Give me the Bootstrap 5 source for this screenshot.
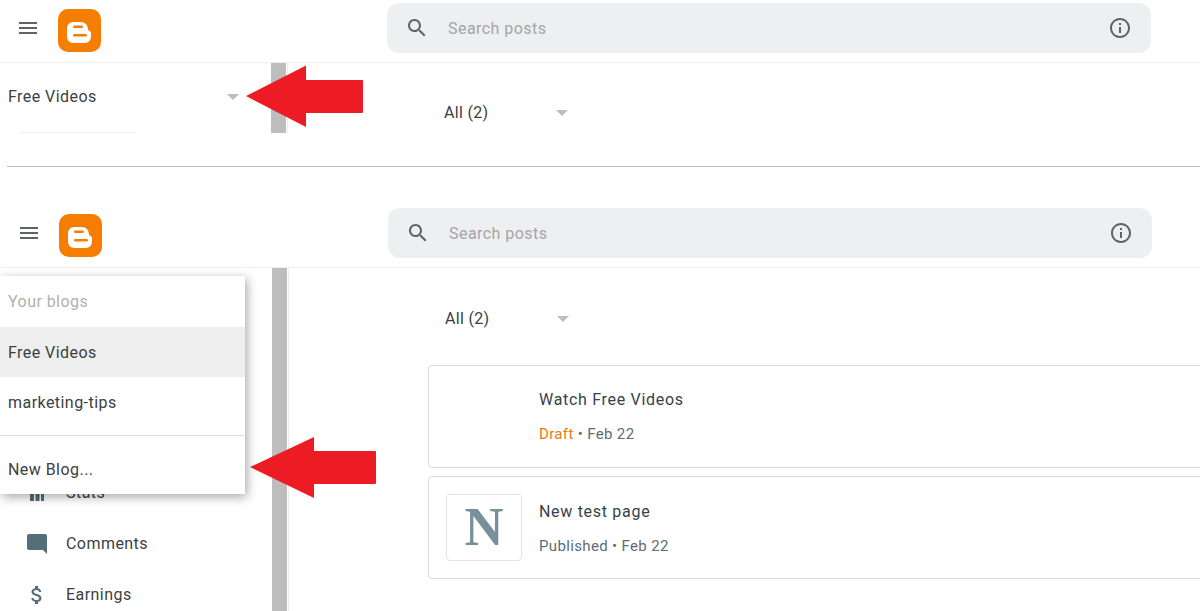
<!DOCTYPE html>
<html lang="en">
<head>
    <meta charset="UTF-8">
    <meta name="viewport" content="width=device-width, initial-scale=1.0">
    <title>Blogger - Posts</title>
    <link href="https://cdn.jsdelivr.net/npm/bootstrap@5.3.0/dist/css/bootstrap.min.css" rel="stylesheet">
    <style>
        html, body {
            height: 611px;
            overflow: hidden;
        }
        body {
            background-color: #fff;
            color: #3c4043;
            font-family: Roboto, "Liberation Sans", sans-serif;
            font-size: 16px;
            letter-spacing: .45px;
        }
        .page-wrap {
            height: 611px;
            overflow: hidden;
        }
        .shot-top {
            height: 133px;
            margin-bottom: 33px;
        }
        .shot-bottom {
            padding-top: 38px;
            padding-left: 1px;
        }
        .shot-rule {
            height: 1px;
            margin-left: 7px;
            background-color: #bdbdbd;
        }
        .app-bar {
            height: 63px;
            padding-bottom: 7px;
            border-bottom: 1px solid #f0f0f0;
        }
        .burger {
            width: 24px;
            height: 24px;
            margin-left: 16px;
            fill: #5f6368;
        }
        .blogger-logo {
            width: 43px;
            height: 43px;
            margin-left: 18px;
            margin-top: 5px;
        }
        .search-box {
            width: 764px;
            height: 50px;
            margin-left: 286px;
            padding: 0 19px 0 18px;
            background-color: #eeeff1;
            border-radius: 12px;
            color: #a3a5a8;
        }
        .search-box svg {
            width: 24px;
            height: 24px;
            fill: #5f6368;
        }
        .search-box span {
            margin-left: 19px;
            padding-top: 2px;
        }
        .side-col {
            width: 271px;
            flex: none;
        }
        .fake-scroll {
            width: 15px;
            flex: none;
            background-color: #bdbdbd;
        }
        .scroll-edge {
            width: 1px;
            flex: none;
            margin-left: 1px;
            background-color: #ececec;
        }
        .top-row {
            height: 70px;
        }
        .blog-picker {
            height: 65px;
            padding: 2px 32px 0 8px;
        }
        .side-fade {
            height: 1px;
            width: 115px;
            margin-left: 20px;
            background-color: #f1f1f1;
        }
        .caret-down {
            width: 0;
            height: 0;
            border-left: 6px solid transparent;
            border-right: 6px solid transparent;
            border-top: 6px solid #bdbdbd;
        }
        .main-col {
            min-width: 0;
            padding-left: 139px;
        }
        .filter-row {
            width: 141px;
            height: 97px;
            padding-left: 17px;
            padding-top: 5px;
            letter-spacing: .3px;
        }
        .filter-row-top {
            height: 98px;
            padding-top: 2px;
        }
        .bottom-row {
            height: 344px;
        }
        .side-stack {
            padding-top: 199px;
        }
        .side-link {
            height: 51px;
            padding-left: 24px;
        }
        .side-link svg {
            width: 24px;
            height: 24px;
            fill: #546e7a;
        }
        .side-link span {
            margin-left: 17px;
        }
        .blog-menu {
            top: 276px;
            left: 0;
            width: 245px;
            padding: 0;
            border: 0;
            border-radius: 0;
            box-shadow: 2px 3px 10px rgba(0, 0, 0, .35);
            font-size: 16px;
        }
        .blog-menu .dropdown-item {
            height: 50px;
            padding: 0 8px;
            line-height: 52px;
            color: #3c4043;
        }
        .blog-menu .menu-label {
            height: 51px;
            line-height: 51px;
            color: #b0b0b0;
        }
        .blog-menu .dropdown-item.is-current {
            background-color: #eeeeee;
        }
        .blog-menu .menu-sep {
            height: 59px;
            border-bottom: 1px solid #e0e0e0;
        }
        .blog-menu .item-new {
            height: 58px;
            line-height: 67px;
        }
        .post-card {
            width: 800px;
            border: 1px solid #d9d9d9;
            border-radius: 4px;
        }
        .post-draft {
            height: 103px;
            margin-bottom: 8px;
        }
        .post-page {
            height: 103px;
        }
        .post-thumb {
            width: 76px;
            height: 67px;
            margin-left: 17px;
            border: 1px solid #e4e4e4;
            border-radius: 4px;
            color: #78909c;
            font-family: "Liberation Serif", "DejaVu Serif", serif;
            font-size: 54px;
            font-weight: 700;
            letter-spacing: 0;
        }
        .post-thumb-empty {
            border-color: transparent;
        }
        .post-text {
            margin-left: 17px;
        }
        .post-page .post-text {
            margin-top: 2px;
        }
        .post-title {
            margin-bottom: 11px;
            color: #37424a;
            letter-spacing: .7px;
        }
        .post-meta {
            font-size: 15px;
            letter-spacing: .35px;
            color: #5f6b76;
        }
        .draft-tag {
            color: #e67a10;
        }
        .red-arrow {
            fill: #ed1c24;
        }
        .arrow-top {
            top: 65px;
            left: 246px;
        }
        .arrow-bottom {
            top: 436px;
            left: 250px;
        }
    </style>
</head>
<body>
    <div class="page-wrap position-relative">

        <div class="shot-top">
            <div class="app-bar d-flex align-items-center">
                <svg class="burger flex-shrink-0" viewBox="0 0 24 24"><path d="M3 18h18v-2H3v2zm0-5h18v-2H3v2zm0-7v2h18V6H3z"/></svg>
                <svg class="blogger-logo flex-shrink-0" viewBox="0 0 43 43"><rect width="43" height="43" rx="10" fill="#f57d00"/><path fill="#fff" d="M15 13h8a7 7 0 0 1 7 7a2 2 0 0 0 1.500 2a2 2 0 0 1 1.500 2V28a6 6 0 0 1-6 6H15a6 6 0 0 1-6-6V19a6 6 0 0 1 6-6z"/><rect x="15" y="16.500" width="10" height="2.600" rx="1.300" fill="#f57d00"/><rect x="15" y="25" width="14" height="2.600" rx="1.300" fill="#f57d00"/></svg>
                <div class="search-box d-flex align-items-center flex-shrink-0">
                    <svg viewBox="0 0 24 24"><path d="M15.5 14h-.79l-.28-.27C15.41 12.59 16 11.11 16 9.5 16 5.91 13.09 3 9.5 3S3 5.91 3 9.5 5.91 16 9.5 16c1.61 0 3.09-.59 4.23-1.57l.27.28v.79l5 4.99L20.49 19l-4.99-5zm-6 0C7.01 14 5 11.99 5 9.5S7.01 5 9.5 5 14 7.01 14 9.5 11.99 14 9.5 14z"/></svg>
                    <span class="flex-grow-1">Search posts</span>
                    <svg viewBox="0 0 24 24"><path d="M11 7h2v2h-2zm0 4h2v6h-2zm1-9C6.48 2 2 6.48 2 12s4.48 10 10 10 10-4.48 10-10S17.52 2 12 2zm0 18c-4.41 0-8-3.59-8-8s3.59-8 8-8 8 3.59 8 8-3.59 8-8 8z"/></svg>
                </div>
            </div>
            <div class="top-row d-flex">
                <div class="side-col">
                    <div class="blog-picker d-flex align-items-center justify-content-between">
                        <span>Free Videos</span>
                        <i class="caret-down"></i>
                    </div>
                    <div class="side-fade mt-1"></div>
                </div>
                <div class="fake-scroll"></div>
                <div class="scroll-edge"></div>
                <div class="main-col flex-grow-1">
                    <div class="filter-row filter-row-top d-flex align-items-center justify-content-between">
                        <span>All (2)</span>
                        <i class="caret-down"></i>
                    </div>
                </div>
            </div>
        </div>

        <div class="shot-rule"></div>

        <div class="shot-bottom">
            <div class="app-bar d-flex align-items-center">
                <svg class="burger flex-shrink-0" viewBox="0 0 24 24"><path d="M3 18h18v-2H3v2zm0-5h18v-2H3v2zm0-7v2h18V6H3z"/></svg>
                <svg class="blogger-logo flex-shrink-0" viewBox="0 0 43 43"><rect width="43" height="43" rx="10" fill="#f57d00"/><path fill="#fff" d="M15 13h8a7 7 0 0 1 7 7a2 2 0 0 0 1.500 2a2 2 0 0 1 1.500 2V28a6 6 0 0 1-6 6H15a6 6 0 0 1-6-6V19a6 6 0 0 1 6-6z"/><rect x="15" y="16.500" width="10" height="2.600" rx="1.300" fill="#f57d00"/><rect x="15" y="25" width="14" height="2.600" rx="1.300" fill="#f57d00"/></svg>
                <div class="search-box d-flex align-items-center flex-shrink-0">
                    <svg viewBox="0 0 24 24"><path d="M15.5 14h-.79l-.28-.27C15.41 12.59 16 11.11 16 9.5 16 5.91 13.09 3 9.5 3S3 5.91 3 9.5 5.91 16 9.5 16c1.61 0 3.09-.59 4.23-1.57l.27.28v.79l5 4.99L20.49 19l-4.99-5zm-6 0C7.01 14 5 11.99 5 9.5S7.01 5 9.5 5 14 7.01 14 9.5 11.99 14 9.5 14z"/></svg>
                    <span class="flex-grow-1">Search posts</span>
                    <svg viewBox="0 0 24 24"><path d="M11 7h2v2h-2zm0 4h2v6h-2zm1-9C6.48 2 2 6.48 2 12s4.48 10 10 10 10-4.48 10-10S17.52 2 12 2zm0 18c-4.41 0-8-3.59-8-8s3.59-8 8-8 8 3.59 8 8-3.59 8-8 8z"/></svg>
                </div>
            </div>
            <div class="bottom-row d-flex">
                <div class="side-col side-stack">
                    <div class="side-link d-flex align-items-center">
                        <svg viewBox="0 0 24 24"><path d="M5 9h4v11H5zM10.500 13h4v7h-4zM16 11h3v9h-3z"/></svg>
                        <span>Stats</span>
                    </div>
                    <div class="side-link d-flex align-items-center">
                        <svg viewBox="0 0 24 24"><path d="M21.99 4c0-1.1-.89-2-1.99-2H4c-1.1 0-2 .9-2 2v12c0 1.100.9 2 2 2h14l4 4-.01-18z"/></svg>
                        <span>Comments</span>
                    </div>
                    <div class="side-link d-flex align-items-center">
                        <svg viewBox="0 0 24 24"><path d="M11.800 10.900c-2.270-.590-3-1.200-3-2.150 0-1.090 1.010-1.850 2.700-1.850 1.780 0 2.440.850 2.500 2.100h2.210c-.070-1.720-1.120-3.300-3.210-3.810V3h-3v2.160c-1.940.420-3.500 1.680-3.500 3.610 0 2.310 1.910 3.460 4.700 4.130 2.500.600 3 1.480 3 2.410 0 .690-.490 1.790-2.700 1.790-2.060 0-2.870-.920-2.980-2.100h-2.200c.120 2.190 1.760 3.420 3.680 3.830V21h3v-2.150c1.950-.370 3.500-1.500 3.500-3.550 0-2.840-2.430-3.810-4.700-4.400z"/></svg>
                        <span>Earnings</span>
                    </div>
                </div>
                <div class="fake-scroll"></div>
                <div class="scroll-edge"></div>
                <div class="main-col flex-grow-1">
                    <div class="filter-row d-flex align-items-center justify-content-between">
                        <span>All (2)</span>
                        <i class="caret-down"></i>
                    </div>
                    <div class="card post-card post-draft flex-row align-items-center">
                        <div class="post-thumb post-thumb-empty flex-shrink-0"></div>
                        <div class="post-text">
                            <div class="post-title">Watch Free Videos</div>
                            <div class="post-meta"><span class="draft-tag">Draft</span> • Feb 22</div>
                        </div>
                    </div>
                    <div class="card post-card post-page flex-row align-items-center">
                        <div class="post-thumb d-flex align-items-center justify-content-center flex-shrink-0">N</div>
                        <div class="post-text">
                            <div class="post-title">New test page</div>
                            <div class="post-meta">Published • Feb 22</div>
                        </div>
                    </div>
                </div>
            </div>
        </div>

        <!-- popup over the sidebar -->
        <div class="dropdown-menu show blog-menu position-absolute">
            <div class="dropdown-item menu-label">Your blogs</div>
            <a class="dropdown-item is-current" href="#">Free Videos</a>
            <div class="menu-sep"><a class="dropdown-item" href="#">marketing-tips</a></div>
            <a class="dropdown-item item-new" href="#">New Blog...</a>
        </div>

        <!-- annotations -->
        <svg class="position-absolute arrow-top" width="118" height="64" viewBox="0 0 118 64"><path class="red-arrow" d="M0 31 60 0.500V15H116a1 1 0 0 1 1 1V47a1 1 0 0 1-1 1H60V62z"/></svg>
        <svg class="position-absolute arrow-bottom" width="127" height="64" viewBox="0 0 127 64"><path class="red-arrow" d="M0 31 64 1V15H125a1 1 0 0 1 1 1V47a1 1 0 0 1-1 1H64V62z"/></svg>
    </div>

    <script src="https://cdn.jsdelivr.net/npm/bootstrap@5.3.0/dist/js/bootstrap.bundle.min.js"></script>
</body>
</html>
